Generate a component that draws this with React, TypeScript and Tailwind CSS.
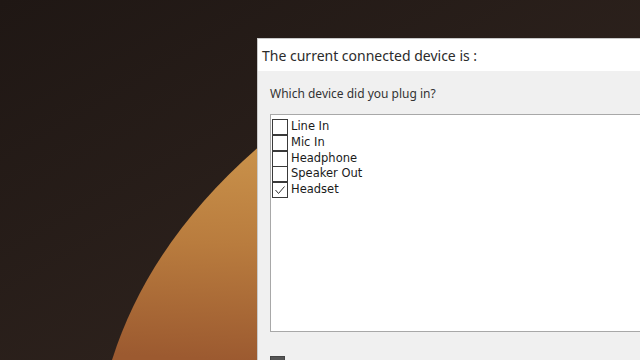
export default function App() {
  const items = [
    { label: "Line In", checked: false },
    { label: "Mic In", checked: false },
    { label: "Headphone", checked: false },
    { label: "Speaker Out", checked: false },
    { label: "Headset", checked: true },
  ];

  return (
    <div className="relative w-[640px] h-[360px] overflow-hidden bg-[#241a17]">
      {/* desktop wallpaper */}
      <svg className="absolute inset-0" width="640" height="360" viewBox="0 0 640 360">
        <defs>
          <linearGradient id="bg" x1="0" y1="0" x2="1" y2="1">
            <stop offset="0" stopColor="#1f1714" />
            <stop offset="0.6" stopColor="#2c211c" />
            <stop offset="1" stopColor="#2a1d18" />
          </linearGradient>
          <linearGradient id="orb" x1="240" y1="150" x2="230" y2="360" gradientUnits="userSpaceOnUse">
            <stop offset="0" stopColor="#c9914a" />
            <stop offset="0.45" stopColor="#b97c3e" />
            <stop offset="1" stopColor="#9c5a30" />
          </linearGradient>
        </defs>
        <rect width="640" height="360" fill="url(#bg)" />
        <path d="M262 144 Q150 240 112 360 L640 360 L640 144 Z" fill="url(#orb)" />
      </svg>

      {/* dialog window */}
      <div
        className="absolute left-[257px] top-[38px] w-[400px] h-[340px] flex flex-col border border-[#c8c8c8] bg-[#f0f0f0]"
        style={{ fontFamily: '"Noto Sans", "DejaVu Sans", sans-serif' }}
      >
        <div className="h-[32px] bg-white flex items-center pl-[4px] text-[14px] text-[#2b2b2b]">
          The current connected device is :
        </div>
        <div className="pl-[12px] pt-[15px] text-[12px] text-[#333] leading-[16px]">
          Which device did you plug in?
        </div>
        <div className="ml-[12px] mt-[12px] h-[218px] bg-white border border-[#a8a8a8] pt-[4px] pl-[1px]">
          <div
            className="flex flex-col"
            style={{ fontFamily: '"DejaVu Sans", Verdana, sans-serif' }}
          >
            {items.map((it) => (
              <div key={it.label} className="flex items-center h-[15.75px]">
                <div className="w-[16px] h-[16px] border border-[#3a3a3a] bg-white flex items-center justify-center -mb-[0.25px]">
                  {it.checked && (
                    <svg width="12" height="10" viewBox="0 0 12 10">
                      <path d="M1.5 5 L4.5 8.5 L10.5 1.5" fill="none" stroke="#333" strokeWidth="1" />
                    </svg>
                  )}
                </div>
                <span className="ml-[3px] text-[11.5px] text-[#1a1a1a] leading-none">{it.label}</span>
              </div>
            ))}
          </div>
        </div>
        <div className="ml-[12px] mt-[24px] w-[15px] h-[15px] bg-[#555] border border-[#444]" />
      </div>
    </div>
  );
}
